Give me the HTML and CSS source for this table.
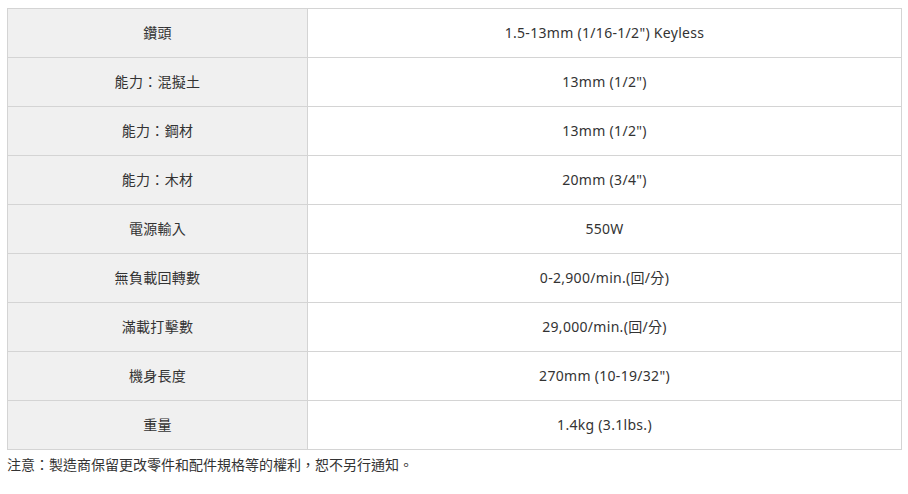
FILE: index.html
```html
<!DOCTYPE html>
<html lang="zh-Hant">
<head>
<meta charset="utf-8">
<link rel="stylesheet" href="styles.css">
</head>
<body>
<div class="wrap">
<table class="spec">
<tr><td class="k">鑽頭</td><td class="v">1.5-13mm (1/16-1/2") Keyless</td></tr>
<tr><td class="k">能力：混擬土</td><td class="v">13mm (1/2")</td></tr>
<tr><td class="k">能力：鋼材</td><td class="v">13mm (1/2")</td></tr>
<tr><td class="k">能力：木材</td><td class="v">20mm (3/4")</td></tr>
<tr><td class="k">電源輸入</td><td class="v">550W</td></tr>
<tr><td class="k">無負載回轉數</td><td class="v">0-2,900/min.(回/分)</td></tr>
<tr><td class="k">滿載打擊數</td><td class="v">29,000/min.(回/分)</td></tr>
<tr><td class="k">機身長度</td><td class="v">270mm (10-19/32")</td></tr>
<tr><td class="k">重量</td><td class="v">1.4kg (3.1lbs.)</td></tr>
</table>
<p class="note">注意：製造商保留更改零件和配件規格等的權利，恕不另行通知。</p>
</div>
</body>
</html>
```
FILE: styles.css
```css
html, body { margin: 0; padding: 0; background: #fff; }
body {
  font-family: "Noto Sans", "Noto Sans CJK TC", sans-serif;
  font-size: 14px;
  color: #333;
  text-spacing-trim: space-all;
}
.wrap { padding: 8px 0 0 7px; }
.spec {
  width: 895px;
  border-collapse: collapse;
  table-layout: fixed;
}
.spec td {
  border: 1px solid #d4d4d4;
  height: 48px;
  padding: 0;
  text-align: center;
  vertical-align: middle;
  line-height: 20px;
}
.spec td.k { width: 299px; background: #f0f0f0; letter-spacing: 0.3px; }
.spec td.v { background: #fff; letter-spacing: 0.3px; }
.note {
  margin: 2px 0 0 0;
  line-height: 24px;
  font-family: "Noto Sans CJK TC", sans-serif;
}
```
